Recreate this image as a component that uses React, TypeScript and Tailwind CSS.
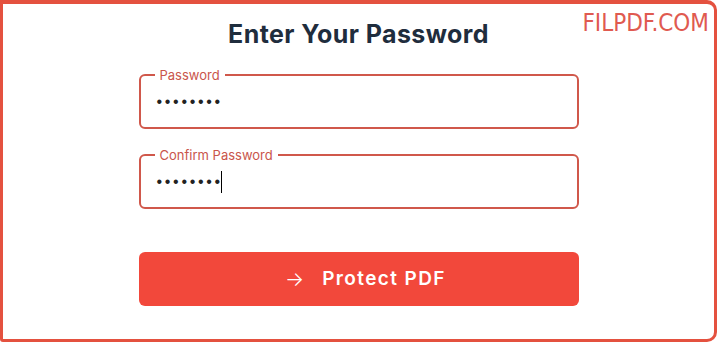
import React from 'react';

const fields = [
  { label: 'Password', caret: false },
  { label: 'Confirm Password', caret: true },
];

const App = () => {
  return (
    <div className="w-[719px] h-[344px] bg-white overflow-hidden" style={{ fontFamily: 'Inter, "Open Sans", sans-serif' }}>
      <div className="relative w-[717px] h-[342px] border-[3px] border-t-4 border-[#e4513f] rounded-r-[10px] rounded-bl-[3px] flex flex-col items-center">
        <span
          className="absolute right-[5px] top-[4px] text-[24px] leading-[30px] text-[#e05a50]"
          style={{ fontFamily: '"DejaVu Sans Condensed", "Liberation Sans Narrow", sans-serif' }}
        >
          FILPDF.COM
        </span>

        <h1 className="mt-[15px] text-[25px] leading-[30px] font-bold text-[#1f2d3d] tracking-[0.4px]">
          Enter Your Password
        </h1>

        <div className="mt-[18px] w-[440px] flex flex-col gap-[18px]">
          {fields.map((f) => (
            <fieldset
              key={f.label}
              className="h-[62px] border-2 border-[#d0584b] rounded-[6px] pl-[16px] pr-[14px]"
            >
              <legend className="ml-[-2px] px-[5px] text-[13px] leading-[16px] text-[#c9554b]">{f.label}</legend>
              <div className="flex items-center h-[37px]">
                <span
                  className="text-[16px] text-[#222] tracking-[2.7px]"
                  style={{ fontFamily: '"Liberation Sans", Arial, sans-serif' }}
                >
                  ••••••••
                </span>
                {f.caret && <span className="ml-[-2px] w-px h-[22px] bg-black" />}
              </div>
            </fieldset>
          ))}
        </div>

        <button className="mt-[43px] w-[440px] h-[54px] pl-[14px] bg-[#f2483b] rounded-[6px] flex items-center justify-center gap-[18px] text-white">
          <span className="text-[20px] font-light leading-none">→</span>
          <span className="text-[19px] font-semibold tracking-[1.4px]">Protect PDF</span>
        </button>
      </div>
    </div>
  );
};

export default App;
